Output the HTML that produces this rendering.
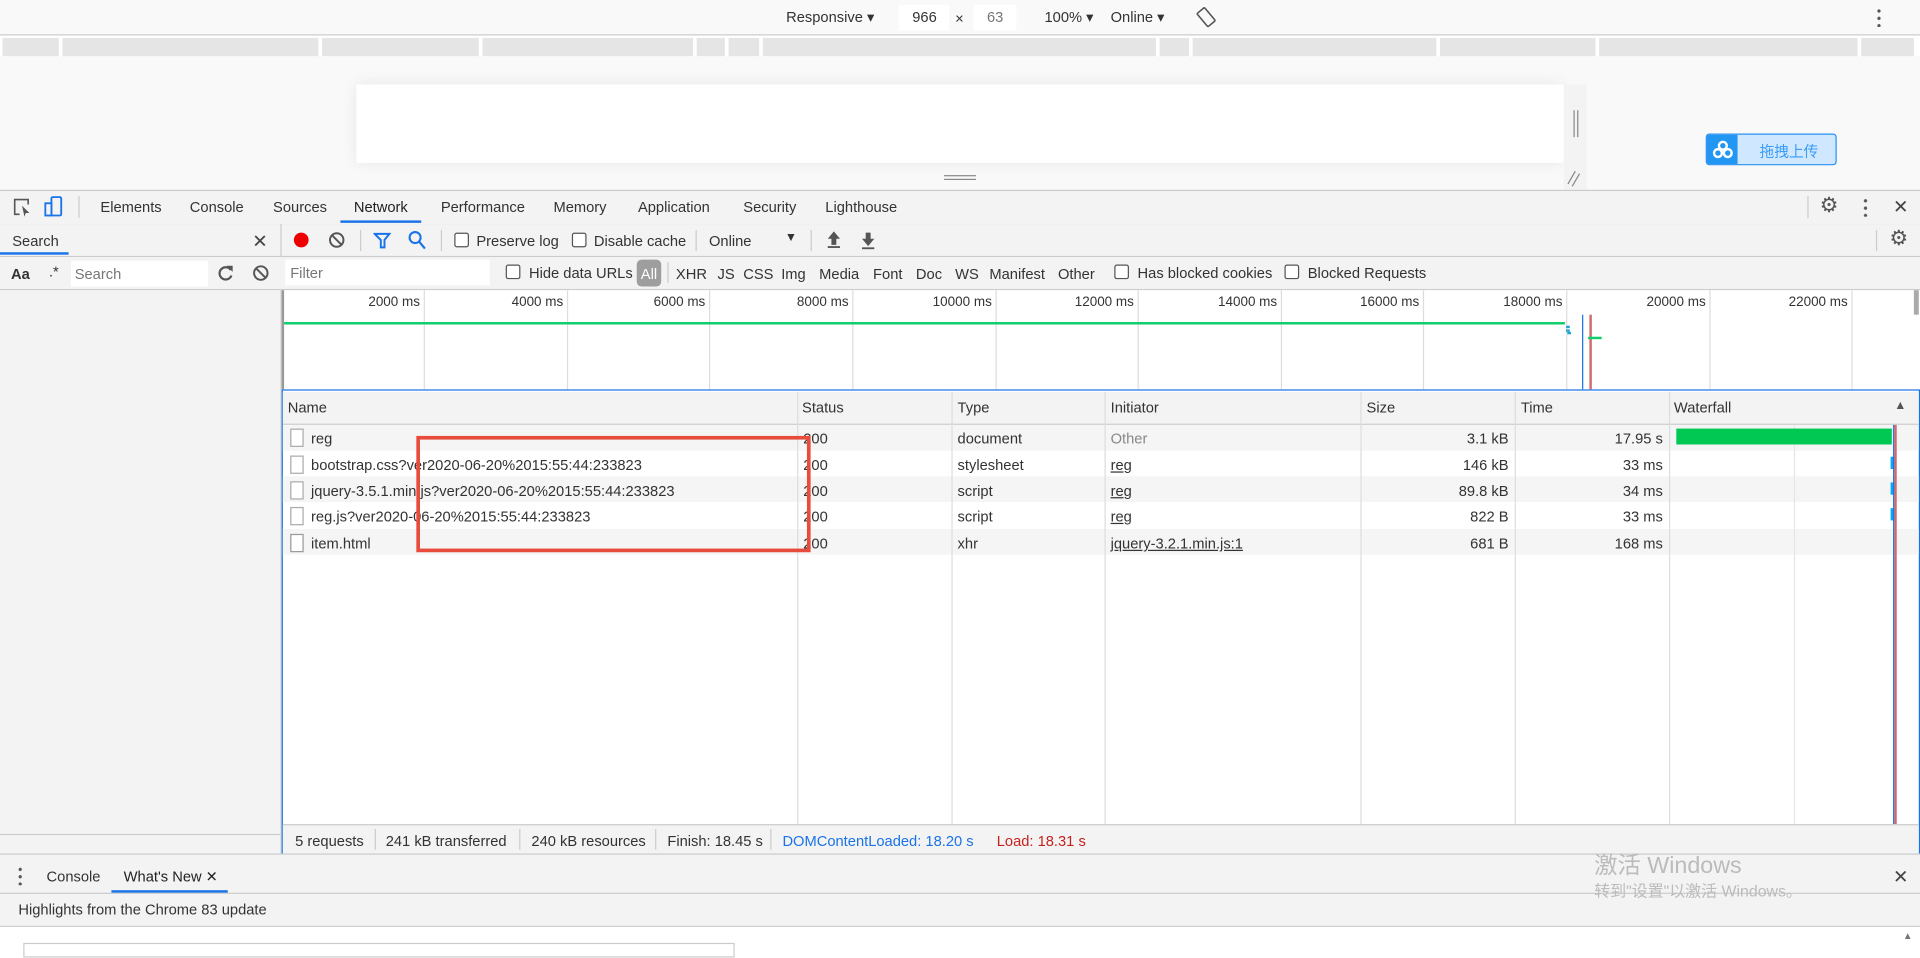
<!DOCTYPE html>
<html><head><meta charset="utf-8"><style>
html,body{margin:0;padding:0;width:1920px;height:951px;overflow:hidden;background:#fff}
#w{position:absolute;left:0;top:0;width:1568px;height:777px;transform:scale(1.22449);transform-origin:0 0;font-family:"Liberation Sans","Noto Sans CJK SC",sans-serif;font-size:12px;color:#333}
.a{position:absolute;white-space:nowrap}
.cb{position:absolute;width:10px;height:10px;border:1px solid #555;border-radius:2px;background:#fff}
.vl{position:absolute;width:1px;background:#ddd}
.hl{position:absolute;height:1px;background:#ccc}
.mq{position:absolute;top:31px;height:15px;background:#e5e5e5}
.row{position:absolute;left:231px;width:1336px;height:21px}
.fi{position:absolute;width:9px;height:13px;border:1px solid #aaa;background:#fff}
</style></head><body><div id="w">
<!-- top bar -->
<div class="a" style="left:0;top:0;width:1568px;height:28px;background:#f9f9f9;border-bottom:1px solid #ccc"></div>
<div class="a" style="left:642px;top:7px">Responsive ▾</div>
<div class="a" style="left:734px;top:4px;width:41px;height:21px;background:#fff"></div>
<div class="a" style="left:745px;top:7px">966</div>
<div class="a" style="left:780px;top:8px">×</div>
<div class="a" style="left:795px;top:4px;width:35px;height:21px;background:#fff"></div>
<div class="a" style="left:806px;top:7px;color:#777">63</div>
<div class="a" style="left:853px;top:7px">100% ▾</div>
<div class="a" style="left:907px;top:7px">Online ▾</div>
<svg class="a" style="left:977px;top:5px" width="16" height="18"><rect x="4" y="2" width="8" height="14" rx="1" transform="rotate(-40 8 9)" fill="none" stroke="#555" stroke-width="1.3"/></svg>
<div class="a" style="left:1533px;top:6px;width:3px;height:16px;background:radial-gradient(circle,#555 1.2px,transparent 1.5px) 0 0/3px 6px"></div>
<!-- media query bar -->
<div class="mq" style="left:2px;width:46px"></div><div class="mq" style="left:51px;width:209px"></div><div class="mq" style="left:263px;width:128px"></div><div class="mq" style="left:394px;width:172px"></div><div class="mq" style="left:569px;width:23px"></div><div class="mq" style="left:595px;width:25px"></div><div class="mq" style="left:623px;width:321px"></div><div class="mq" style="left:947px;width:24px"></div><div class="mq" style="left:974px;width:199px"></div><div class="mq" style="left:1176px;width:127px"></div><div class="mq" style="left:1306px;width:211px"></div><div class="mq" style="left:1520px;width:43px"></div>
<div class="a" style="left:0;top:46px;width:1568px;height:109px;background:#f9f9f9"></div>
<div class="a" style="left:291px;top:69px;width:986px;height:64px;background:#fff;box-shadow:0 0 12px rgba(0,0,0,.08)"></div>
<div class="a" style="left:1277px;top:69px;width:19px;height:86px;background:#f3f3f3"></div>
<div class="a" style="left:1285px;top:90px;width:1px;height:22px;background:#888;box-shadow:3px 0 0 #888"></div>
<div class="a" style="left:771px;top:143px;width:26px;height:1px;background:#888;box-shadow:0 3px 0 #888"></div>
<div class="a" style="left:1283px;top:139px;width:1px;height:12px;background:#888;transform:rotate(30deg);box-shadow:4px 0 0 #888"></div>
<div class="a" style="left:1393px;top:109px;width:105px;height:24px;border:1px solid #2b8ff0;border-radius:3px;background:#cfe8ff;overflow:hidden"><div style="position:absolute;left:0;top:0;width:25px;height:24px;background:#2196f3"></div><svg style="position:absolute;left:4px;top:4px" width="18" height="16"><circle cx="9" cy="5" r="3.2" fill="none" stroke="#fff" stroke-width="2"/><circle cx="5" cy="11" r="3.2" fill="none" stroke="#fff" stroke-width="2"/><circle cx="13" cy="11" r="3.2" fill="none" stroke="#fff" stroke-width="2"/></svg><div style="position:absolute;left:43px;top:5px;color:#3a9cf7">拖拽上传</div></div>
<!-- devtools tabs -->
<div class="a" style="left:0;top:155px;width:1568px;height:27px;background:#f3f3f3;border-top:1px solid #ccc;border-bottom:1px solid #ccc"></div>
<svg class="a" style="left:10px;top:161px" width="16" height="16"><path d="M6 14H2V2h11v4" fill="none" stroke="#555" stroke-width="1.3"/><path d="M8 7l6 6-3 0-1 3z" fill="#555"/></svg>
<svg class="a" style="left:36px;top:160px" width="16" height="18"><rect x="6" y="1" width="8" height="15" rx="1" fill="none" stroke="#1a73e8" stroke-width="1.5"/><rect x="1" y="6" width="5" height="10" fill="none" stroke="#1a73e8" stroke-width="1.5"/></svg>
<div class="a" style="left:64px;top:160px;width:1px;height:18px;background:#ccc"></div>
<div class="a" style="left:82px;top:162px">Elements</div><div class="a" style="left:155px;top:162px">Console</div><div class="a" style="left:223px;top:162px">Sources</div><div class="a" style="left:289px;top:162px;color:#222">Network</div><div class="a" style="left:360px;top:162px">Performance</div><div class="a" style="left:452px;top:162px">Memory</div><div class="a" style="left:521px;top:162px">Application</div><div class="a" style="left:607px;top:162px">Security</div><div class="a" style="left:674px;top:162px">Lighthouse</div>
<div class="a" style="left:278px;top:180px;width:66px;height:2px;background:#1a73e8"></div>
<div class="a" style="left:1476px;top:160px;width:1px;height:18px;background:#ccc"></div>
<div class="a" style="left:1486px;top:158px;font-size:17px;color:#555">⚙</div>
<div class="a" style="left:1522px;top:161px;width:3px;height:16px;background:radial-gradient(circle,#555 1.2px,transparent 1.5px) 0 0/3px 6px"></div>
<div class="a" style="left:1546px;top:160px;font-size:15px;color:#444">✕</div>
<!-- second row -->
<div class="a" style="left:0;top:183px;width:1568px;height:26px;background:#f3f3f3;border-bottom:1px solid #ccc"></div>
<div class="a" style="left:229px;top:183px;width:1px;height:514px;background:#ccc"></div>
<div class="a" style="left:10px;top:190px">Search</div>
<div class="a" style="left:0;top:206px;width:56px;height:2px;background:#1a73e8"></div>
<div class="a" style="left:206px;top:188px;font-size:15px;color:#444">✕</div>
<svg class="a" style="left:238px;top:188px" width="16" height="16"><circle cx="8" cy="8" r="6" fill="#e00"/></svg>
<svg class="a" style="left:268px;top:189px" width="15" height="15"><circle cx="7" cy="7" r="5.5" fill="none" stroke="#555" stroke-width="1.6"/><path d="M3 3l8 8" stroke="#555" stroke-width="1.6"/></svg>
<div class="a" style="left:294px;top:188px;width:1px;height:17px;background:#ccc"></div>
<svg class="a" style="left:305px;top:189px" width="15" height="15"><path d="M1 2h12L9 7v6H6V7z" fill="none" stroke="#1a73e8" stroke-width="1.6"/></svg>
<svg class="a" style="left:333px;top:188px" width="15" height="16"><circle cx="6" cy="6" r="4.5" fill="none" stroke="#1a73e8" stroke-width="1.7"/><path d="M9 9l5 6" stroke="#1a73e8" stroke-width="1.8"/></svg>
<div class="a" style="left:360px;top:188px;width:1px;height:17px;background:#ccc"></div>
<div class="cb" style="left:371px;top:190px"></div><div class="a" style="left:389px;top:190px">Preserve log</div>
<div class="cb" style="left:467px;top:190px"></div><div class="a" style="left:485px;top:190px">Disable cache</div>
<div class="a" style="left:568px;top:188px;width:1px;height:17px;background:#ccc"></div>
<div class="a" style="left:579px;top:190px">Online</div><div class="a" style="left:641px;top:189px;font-size:10px">▼</div>
<div class="a" style="left:662px;top:188px;width:1px;height:17px;background:#ccc"></div>
<svg class="a" style="left:674px;top:188px" width="14" height="16"><path d="M7 1l5 6H9v5H5V7H2z" fill="#555"/><rect x="2" y="13" width="10" height="1.5" fill="#555"/></svg>
<svg class="a" style="left:702px;top:188px" width="14" height="16"><path d="M7 13l5-6H9V2H5v5H2z" fill="#555"/><rect x="2" y="14" width="10" height="1.5" fill="#555"/></svg>
<div class="a" style="left:1532px;top:188px;width:1px;height:17px;background:#ccc"></div>
<div class="a" style="left:1543px;top:185px;font-size:17px;color:#555">⚙</div>
<!-- third row -->
<div class="a" style="left:0;top:210px;width:1568px;height:26px;background:#f3f3f3;border-bottom:1px solid #ccc"></div>
<div class="a" style="left:9px;top:217px;font-weight:bold">Aa</div><div class="a" style="left:40px;top:215px">.*</div>
<div class="a" style="left:58px;top:213px;width:112px;height:21px;background:#fff"></div><div class="a" style="left:61px;top:217px;color:#777">Search</div>
<svg class="a" style="left:177px;top:216px" width="14" height="14"><path d="M11.5 4.5A5 5 0 1 0 12 9" fill="none" stroke="#555" stroke-width="1.8"/><path d="M8 1l5 0 0 5z" fill="#555"/></svg>
<svg class="a" style="left:206px;top:216px" width="15" height="15"><circle cx="7" cy="7" r="5.5" fill="none" stroke="#555" stroke-width="1.6"/><path d="M3 3l8 8" stroke="#555" stroke-width="1.6"/></svg>
<div class="a" style="left:233px;top:212px;width:167px;height:21px;background:#fff"></div><div class="a" style="left:237px;top:216px;color:#777">Filter</div>
<div class="cb" style="left:413px;top:216px"></div><div class="a" style="left:432px;top:216px">Hide data URLs</div>
<div class="a" style="left:520px;top:212px;width:20px;height:22px;border-radius:4px;background:#9e9e9e;color:#fff;text-align:center;line-height:24px">All</div>
<div class="a" style="left:545px;top:214px;width:1px;height:17px;background:#ccc"></div>
<div class="a" style="left:552px;top:217px">XHR</div><div class="a" style="left:586px;top:217px">JS</div><div class="a" style="left:607px;top:217px">CSS</div><div class="a" style="left:638px;top:217px">Img</div><div class="a" style="left:669px;top:217px">Media</div><div class="a" style="left:713px;top:217px">Font</div><div class="a" style="left:748px;top:217px">Doc</div><div class="a" style="left:780px;top:217px">WS</div><div class="a" style="left:808px;top:217px">Manifest</div><div class="a" style="left:864px;top:217px">Other</div>
<div class="cb" style="left:910px;top:216px"></div><div class="a" style="left:929px;top:216px">Has blocked cookies</div>
<div class="cb" style="left:1049px;top:216px"></div><div class="a" style="left:1068px;top:216px">Blocked Requests</div>
<!-- left panel body -->
<div class="a" style="left:0;top:237px;width:229px;height:460px;background:#f3f3f3"></div>
<div class="a" style="left:0;top:681px;width:229px;height:1px;background:#ccc"></div>
<!-- overview -->
<div class="a" style="left:230px;top:237px;width:1338px;height:81px;background:#fff"></div>
<div class="a" style="left:230px;top:237px;width:2px;height:81px;background:#999"></div>
<div class="vl" style="left:346px;top:237px;height:81px"></div><div class="vl" style="left:463px;top:237px;height:81px"></div><div class="vl" style="left:579px;top:237px;height:81px"></div><div class="vl" style="left:696px;top:237px;height:81px"></div><div class="vl" style="left:813px;top:237px;height:81px"></div><div class="vl" style="left:929px;top:237px;height:81px"></div><div class="vl" style="left:1046px;top:237px;height:81px"></div><div class="vl" style="left:1162px;top:237px;height:81px"></div><div class="vl" style="left:1279px;top:237px;height:81px"></div><div class="vl" style="left:1396px;top:237px;height:81px"></div><div class="vl" style="left:1512px;top:237px;height:81px"></div>
<div class="a" style="left:280px;top:241px;width:63px;text-align:right;font-size:11px">2000 ms</div>
<div class="a" style="left:397px;top:241px;width:63px;text-align:right;font-size:11px">4000 ms</div>
<div class="a" style="left:513px;top:241px;width:63px;text-align:right;font-size:11px">6000 ms</div>
<div class="a" style="left:630px;top:241px;width:63px;text-align:right;font-size:11px">8000 ms</div>
<div class="a" style="left:747px;top:241px;width:63px;text-align:right;font-size:11px">10000 ms</div>
<div class="a" style="left:863px;top:241px;width:63px;text-align:right;font-size:11px">12000 ms</div>
<div class="a" style="left:980px;top:241px;width:63px;text-align:right;font-size:11px">14000 ms</div>
<div class="a" style="left:1096px;top:241px;width:63px;text-align:right;font-size:11px">16000 ms</div>
<div class="a" style="left:1213px;top:241px;width:63px;text-align:right;font-size:11px">18000 ms</div>
<div class="a" style="left:1330px;top:241px;width:63px;text-align:right;font-size:11px">20000 ms</div>
<div class="a" style="left:1446px;top:241px;width:63px;text-align:right;font-size:11px">22000 ms</div>
<div class="a" style="left:232px;top:263px;width:1046px;height:2px;background:#0cce6b"></div>
<div class="a" style="left:1279px;top:266px;width:3px;height:2px;background:#1fa4d8;box-shadow:0 3px 0 #1fa4d8,1px 5px 0 #1fa4d8"></div>
<div class="a" style="left:1292px;top:257px;width:1px;height:61px;background:#1a73e8"></div>
<div class="a" style="left:1298px;top:257px;width:2px;height:61px;background:#d06a6a"></div>
<div class="a" style="left:1297px;top:275px;width:11px;height:2px;background:#0cce6b"></div>
<div class="a" style="left:1563px;top:237px;width:4px;height:20px;background:#aaa"></div>
<!-- table -->
<div class="a" style="left:230px;top:318px;width:1336px;height:378px;border:1px solid #1a73e8;background:#fff"></div>
<div class="a" style="left:231px;top:320px;width:1336px;height:26px;background:#f3f3f3;border-bottom:1px solid #ccc"></div>
<div class="row" style="top:347px;background:#f5f5f5"></div><div class="row" style="top:389px;background:#f5f5f5"></div><div class="row" style="top:432px;background:#f5f5f5"></div>
<div class="vl" style="left:651px;top:320px;height:353px"></div><div class="vl" style="left:777px;top:320px;height:353px"></div><div class="vl" style="left:902px;top:320px;height:353px"></div><div class="vl" style="left:1111px;top:320px;height:353px"></div><div class="vl" style="left:1237px;top:320px;height:353px"></div><div class="vl" style="left:1363px;top:320px;height:353px"></div><div class="vl" style="left:1465px;top:347px;height:326px;background:#e6e6e6"></div>
<div class="a" style="left:235px;top:326px">Name</div><div class="a" style="left:655px;top:326px">Status</div><div class="a" style="left:782px;top:326px">Type</div><div class="a" style="left:907px;top:326px">Initiator</div><div class="a" style="left:1116px;top:326px">Size</div><div class="a" style="left:1242px;top:326px">Time</div><div class="a" style="left:1367px;top:326px">Waterfall</div><div class="a" style="left:1547px;top:326px;font-size:10px;color:#555">▲</div>
<div class="fi" style="left:237px;top:350px"></div><div class="a" style="left:254px;top:351px">reg</div><div class="a" style="left:656px;top:351px">200</div><div class="a" style="left:782px;top:351px">document</div><div class="a" style="left:907px;top:351px;color:#888">Other</div><div class="a" style="left:1130px;top:351px;width:102px;text-align:right">3.1 kB</div><div class="a" style="left:1250px;top:351px;width:108px;text-align:right">17.95 s</div>
<div class="fi" style="left:237px;top:372px"></div><div class="a" style="left:254px;top:373px">bootstrap.css?ver2020-06-20%2015:55:44:233823</div><div class="a" style="left:656px;top:373px">200</div><div class="a" style="left:782px;top:373px">stylesheet</div><div class="a" style="left:907px;top:373px;text-decoration:underline">reg</div><div class="a" style="left:1130px;top:373px;width:102px;text-align:right">146 kB</div><div class="a" style="left:1250px;top:373px;width:108px;text-align:right">33 ms</div>
<div class="fi" style="left:237px;top:393px"></div><div class="a" style="left:254px;top:394px">jquery-3.5.1.min.js?ver2020-06-20%2015:55:44:233823</div><div class="a" style="left:656px;top:394px">200</div><div class="a" style="left:782px;top:394px">script</div><div class="a" style="left:907px;top:394px;text-decoration:underline">reg</div><div class="a" style="left:1130px;top:394px;width:102px;text-align:right">89.8 kB</div><div class="a" style="left:1250px;top:394px;width:108px;text-align:right">34 ms</div>
<div class="fi" style="left:237px;top:414px"></div><div class="a" style="left:254px;top:415px">reg.js?ver2020-06-20%2015:55:44:233823</div><div class="a" style="left:656px;top:415px">200</div><div class="a" style="left:782px;top:415px">script</div><div class="a" style="left:907px;top:415px;text-decoration:underline">reg</div><div class="a" style="left:1130px;top:415px;width:102px;text-align:right">822 B</div><div class="a" style="left:1250px;top:415px;width:108px;text-align:right">33 ms</div>
<div class="fi" style="left:237px;top:436px;border-color:#999"></div><div class="a" style="left:254px;top:437px">item.html</div><div class="a" style="left:656px;top:437px">200</div><div class="a" style="left:782px;top:437px">xhr</div><div class="a" style="left:907px;top:437px;text-decoration:underline">jquery-3.2.1.min.js:1</div><div class="a" style="left:1130px;top:437px;width:102px;text-align:right">681 B</div><div class="a" style="left:1250px;top:437px;width:108px;text-align:right">168 ms</div>
<div class="a" style="left:1369px;top:350px;width:176px;height:13px;background:#00c853"></div>
<div class="a" style="left:1544px;top:373px;width:3px;height:10px;background:#03a9f4"></div><div class="a" style="left:1544px;top:394px;width:3px;height:10px;background:#03a9f4"></div><div class="a" style="left:1544px;top:415px;width:3px;height:10px;background:#03a9f4"></div>
<div class="a" style="left:1546px;top:347px;width:1px;height:326px;background:#1a73e8"></div>
<div class="a" style="left:1547px;top:347px;width:2px;height:326px;background:#d06a6a"></div>
<div class="a" style="left:340px;top:356px;width:316px;height:89px;border:3px solid #e74c3c"></div>
<!-- status -->
<div class="a" style="left:231px;top:673px;width:1336px;height:23px;background:#f3f3f3;border-top:1px solid #ccc"></div>
<div class="a" style="left:241px;top:680px">5 requests</div><div class="vl" style="left:306px;top:677px;height:17px;background:#ccc"></div>
<div class="a" style="left:315px;top:680px">241 kB transferred</div><div class="vl" style="left:424px;top:677px;height:17px;background:#ccc"></div>
<div class="a" style="left:434px;top:680px">240 kB resources</div><div class="vl" style="left:535px;top:677px;height:17px;background:#ccc"></div>
<div class="a" style="left:545px;top:680px">Finish: 18.45 s</div><div class="vl" style="left:629px;top:677px;height:17px;background:#ccc"></div>
<div class="a" style="left:639px;top:680px;color:#1a73e8">DOMContentLoaded: 18.20 s</div>
<div class="a" style="left:814px;top:680px;color:#c5221f">Load: 18.31 s</div>
<!-- drawer -->
<div class="a" style="left:0;top:697px;width:1568px;height:58px;background:#f3f3f3;border-top:1px solid #ccc"></div>
<div class="a" style="left:0;top:729px;width:1568px;height:1px;background:#ccc"></div>
<div class="a" style="left:15px;top:707px;width:3px;height:16px;background:radial-gradient(circle,#555 1.2px,transparent 1.5px) 0 0/3px 6px"></div>
<div class="a" style="left:38px;top:709px">Console</div><div class="a" style="left:101px;top:709px;color:#222">What's New ✕</div>
<div class="a" style="left:91px;top:727px;width:95px;height:2px;background:#1a73e8"></div>
<div class="a" style="left:1546px;top:707px;font-size:15px;color:#444">✕</div>
<div class="a" style="left:1302px;top:692px;font-size:19px;color:#bbb">激活 Windows</div>
<div class="a" style="left:1302px;top:717px;font-size:13px;color:#bbb">转到"设置"以激活 Windows。</div>
<div class="a" style="left:15px;top:736px">Highlights from the Chrome 83 update</div>
<div class="a" style="left:0;top:756px;width:1568px;height:1px;background:#ccc"></div>
<div class="a" style="left:19px;top:770px;width:579px;height:10px;border:1px solid #ccc;background:#fff"></div>
<div class="a" style="left:1554px;top:760px;font-size:8px;color:#777">▲</div>
</div></body></html>
